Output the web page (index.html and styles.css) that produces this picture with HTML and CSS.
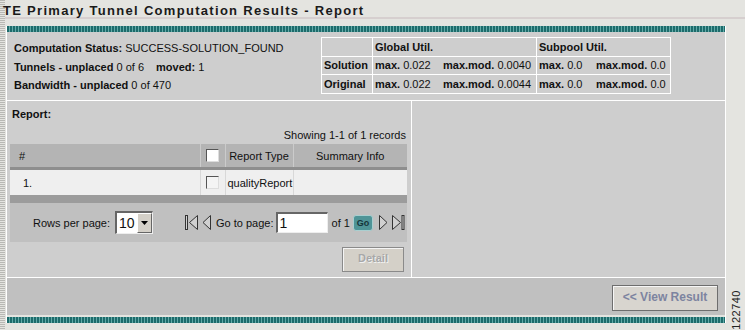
FILE: index.html
```html
<!DOCTYPE html>
<html lang="en">
<head>
    <meta charset="UTF-8">
    <title>TE Primary Tunnel Computation Results - Report</title>
    <link rel="stylesheet" href="styles.css">
</head>
<body>
    <h1 class="page-title">TE Primary Tunnel Computation Results - Report</h1>
    <div class="title-rule"></div>

    <div class="frame">
        <div class="stripe"></div>

        <div class="summary">
            <div class="status">
                <div class="status-line"><b>Computation Status:</b> SUCCESS-SOLUTION_FOUND</div>
                <div class="status-line"><b>Tunnels - unplaced</b> 0 of 6 <b class="moved">moved:</b> 1</div>
                <div class="status-line"><b>Bandwidth - unplaced</b> 0 of 470</div>
            </div>
            <table class="util">
                <tr>
                    <td class="label"></td>
                    <td colspan="2"><b>Global Util.</b></td>
                    <td colspan="2"><b>Subpool Util.</b></td>
                </tr>
                <tr>
                    <td class="label"><b>Solution</b></td>
                    <td class="max1"><b>max.</b> 0.022</td>
                    <td class="mod1"><b>max.mod.</b> 0.0040</td>
                    <td class="max2"><b>max.</b> 0.0</td>
                    <td class="mod2"><b>max.mod.</b> 0.0</td>
                </tr>
                <tr>
                    <td class="label"><b>Original</b></td>
                    <td class="max1"><b>max.</b> 0.022</td>
                    <td class="mod1"><b>max.mod.</b> 0.0044</td>
                    <td class="max2"><b>max.</b> 0.0</td>
                    <td class="mod2"><b>max.mod.</b> 0.0</td>
                </tr>
            </table>
        </div>

        <div class="work">
            <div class="report">
                <div class="report-title">Report:</div>
                <div class="records">Showing 1-1 of 1 records</div>

                <table class="grid">
                    <colgroup>
                        <col class="w-num">
                        <col class="w-check">
                        <col class="w-type">
                        <col>
                    </colgroup>
                    <tr class="grid-head">
                        <th class="col-num">#</th>
                        <th class="col-check"><span class="checkbox"></span></th>
                        <th class="col-type">Report Type</th>
                        <th class="col-info">Summary Info</th>
                    </tr>
                    <tr class="grid-row">
                        <td class="col-num">1.</td>
                        <td class="col-check"><span class="checkbox"></span></td>
                        <td class="col-type">qualityReport</td>
                        <td class="col-info"></td>
                    </tr>
                </table>
                <div class="grid-bar"></div>

                <div class="pager">
                    <span class="rows-label">Rows per page:</span>
                    <span class="select"><span class="select-value">10</span><span class="select-arrow"><svg width="7" height="4" viewBox="0 0 7 4"><path d="M0 0h7L3.5 4z" fill="#000"/></svg></span></span>

                    <span class="nav">
                        <svg class="nav-icon" width="14" height="17" viewBox="0 0 14 17"><rect x="0.5" y="1.5" width="2" height="14" fill="#d0d0d0" stroke="#333"/><path d="M12.5 1.5v14L4.5 8.5z" fill="#d0d0d0" stroke="#333"/></svg>
                        <svg class="nav-icon" width="10" height="17" viewBox="0 0 10 17"><path d="M8.5 1.5v14L1 8.5z" fill="#d0d0d0" stroke="#333"/></svg>
                        <span class="goto-label">Go to page:</span>
                        <span class="page-input">1</span>
                        <span class="of-label">of 1</span>
                        <span class="go-btn">Go</span>
                        <svg class="nav-icon" width="10" height="17" viewBox="0 0 10 17"><path d="M1.5 1.5v14L9 8.5z" fill="#d0d0d0" stroke="#333"/></svg>
                        <svg class="nav-icon" width="14" height="17" viewBox="0 0 14 17"><path d="M1.5 1.5v14L9.5 8.5z" fill="#d0d0d0" stroke="#333"/><rect x="11" y="1.5" width="2" height="14" fill="#d0d0d0" stroke="#333"/></svg>
                    </span>
                </div>

                <div class="report-actions">
                    <span class="btn btn-disabled">Detail</span>
                </div>
            </div>
            <div class="side"></div>
        </div>

        <div class="footer">
            <span class="btn btn-view">&lt;&lt; View Result</span>
        </div>
        <div class="stripe stripe-bottom"></div>
    </div>

    <div class="fig-id">122740</div>
</body>
</html>
```

FILE: styles.css
```css
body {
    margin: 0;
    width: 745px;
    height: 330px;
    overflow: hidden;
    position: relative;
    font-family: "Liberation Sans", Arial, sans-serif;
    font-size: 11px;
    color: #111;
    background-color: #e4e4e0;
    background-image: repeating-linear-gradient(180deg, #b8b8b4 0 1px, #e4e4e0 1px 2px);
    background-size: 5px 100%;
    background-repeat: no-repeat;
}

.page-title {
    margin: 0;
    padding: 4px 0 0 3px;
    height: 13px;
    font-size: 13px;
    line-height: 13px;
    letter-spacing: 1.3px;
    font-weight: bold;
    color: #1a1a1a;
}

.title-rule {
    margin: 0 0 0 5px;
    height: 2px;
    background: #d6cfcf;
}

.frame {
    margin: 7px 0 0 6px;
    width: 718px;
    border-left: 1px solid #fff;
    border-right: 1px solid #fff;
}

.stripe {
    height: 6px;
    background: repeating-linear-gradient(90deg, #1d6b6b 0 2px, #62aaa8 2px 3px);
}

.stripe-bottom {
    margin-top: 2px;
}

.summary {
    display: flex;
    height: 63px;
    padding-top: 5px;
    background: #cecece;
    border-bottom: 1px solid #fff;
}

.status {
    width: 307px;
    padding: 4px 0 0 7px;
}

.status-line {
    height: 18.5px;
    line-height: 14px;
}

.moved {
    margin-left: 9px;
}

.util {
    border-collapse: collapse;
    height: 57px;
}

.util td {
    border: 1px solid #fff;
    height: 17px;
    padding: 0 2px;
    white-space: nowrap;
}

.util .label {
    width: 46px;
}

.util .max1 {
    width: 61px;
    border-right: hidden;
}

.util .mod1 {
    width: 91px;
    padding-left: 5px;
}

.util .max2 {
    width: 52px;
    border-right: hidden;
}

.util .mod2 {
    width: 72px;
    padding-left: 3px;
}

.work {
    display: flex;
    height: 176px;
    background: #cecece;
}

.report {
    width: 397px;
    padding: 0 4px 0 3px;
    border-right: 1px solid #fff;
}

.report-title {
    font-weight: bold;
    padding: 7px 0 0 2px;
    height: 14px;
}

.records {
    text-align: right;
    padding: 7px 1px 0 0;
    height: 15px;
}

.grid {
    width: 397px;
    table-layout: fixed;
    border-collapse: collapse;
}

.w-num {
    width: 190px;
}

.w-check {
    width: 25px;
}

.w-type {
    width: 68px;
}

.grid th {
    height: 23px;
    padding: 0;
    font-weight: normal;
    background: #b4b4b4;
    border-bottom: 3px solid #8e8e8e;
    border-left: 1px solid #cbcbcb;
}

.grid td {
    height: 25px;
    padding: 0;
    background: #efefef;
    border-left: 1px solid #d8d8d8;
}

.grid .col-num {
    text-align: left;
    padding-left: 9px;
    border-left: 0;
}

.grid td.col-num {
    padding-left: 13px;
}

.grid .col-check {
    text-align: center;
}

.grid .col-type {
    text-align: center;
    white-space: nowrap;
}

.grid td.col-type {
    text-align: left;
    padding-left: 2px;
}

.grid .col-info {
    text-align: center;
}

.checkbox {
    display: inline-block;
    vertical-align: middle;
    width: 11px;
    height: 11px;
    background: #fff;
    border-top: 1px solid #555;
    border-left: 1px solid #555;
    border-right: 1px solid #ddd;
    border-bottom: 1px solid #ddd;
}

.grid td .checkbox {
    background: #f4f4f4;
}

.grid-bar {
    height: 8px;
    background: #9c9c9c;
}

.pager {
    display: flex;
    align-items: center;
    height: 39px;
    background: #c0c0c0;
    font-size: 11px;
    white-space: nowrap;
}

.pager > * {
    flex-shrink: 0;
}

.rows-label {
    margin-left: 23px;
}

.select {
    display: flex;
    margin-left: 5px;
    width: 35px;
    height: 20px;
    background: #fff;
    border-top: 2px solid #666;
    border-left: 2px solid #666;
    border-right: 1px solid #eee;
    border-bottom: 1px solid #eee;
}

.select-value {
    flex: 1;
    font-size: 14px;
    line-height: 20px;
    padding-left: 2px;
}

.select-arrow {
    display: flex;
    align-items: center;
    justify-content: center;
    width: 15px;
    background: #d4d0c8;
    border-top: 1px solid #fff;
    border-left: 1px solid #fff;
    border-right: 1px solid #666;
    border-bottom: 1px solid #666;
    box-sizing: border-box;
}

.nav {
    display: flex;
    align-items: center;
    margin-left: 32px;
}

.nav > * {
    flex-shrink: 0;
}

.nav-icon {
    display: block;
    margin-right: 3px;
}

.goto-label {
    margin-left: 1px;
}

.page-input {
    margin-left: 2px;
    width: 47px;
    height: 18px;
    font-size: 14px;
    line-height: 18px;
    padding-left: 2px;
    background: #fff;
    border-top: 2px solid #666;
    border-left: 2px solid #666;
    border-right: 1px solid #eee;
    border-bottom: 1px solid #eee;
}

.of-label {
    margin-left: 4px;
}

.go-btn {
    margin: 0 5px 0 3px;
    width: 18px;
    height: 14px;
    font-size: 9px;
    font-weight: bold;
    line-height: 14px;
    text-align: center;
    color: #16353a;
    background: #4f9497;
    border: 1px solid #a9cfd0;
    border-radius: 3px;
}

.report-actions {
    display: flex;
    justify-content: flex-end;
    padding-top: 5px;
}

.btn {
    display: inline-block;
    box-sizing: border-box;
    font-weight: bold;
    text-align: center;
}

.btn-disabled {
    width: 62px;
    height: 25px;
    margin-right: 3px;
    line-height: 21px;
    color: #a8a8a8;
    background: #d4d0c8;
    border: 1px solid #8a8a8a;
    box-shadow: inset 1px 1px 0 #f4f4f4;
    text-shadow: 1px 1px 0 #f0f0f0;
}

.side {
    flex: 1;
}

.footer {
    display: flex;
    justify-content: flex-end;
    height: 38px;
    padding-top: 7px;
    box-sizing: border-box;
    background: #c0c0c0;
    border-top: 1px solid #fff;
}

.btn-view {
    width: 106px;
    height: 26px;
    margin-right: 7px;
    font-size: 12px;
    line-height: 22px;
    color: #7d84a0;
    background: #d8d5cf;
    border: 1px solid #6e6e6e;
    box-shadow: inset 1px 1px 0 #f6f6f6;
}

.fig-id {
    position: absolute;
    left: 730px;
    top: 290px;
    writing-mode: vertical-rl;
    transform: rotate(180deg);
    font-size: 11px;
    letter-spacing: 0.5px;
    color: #222;
}
```
